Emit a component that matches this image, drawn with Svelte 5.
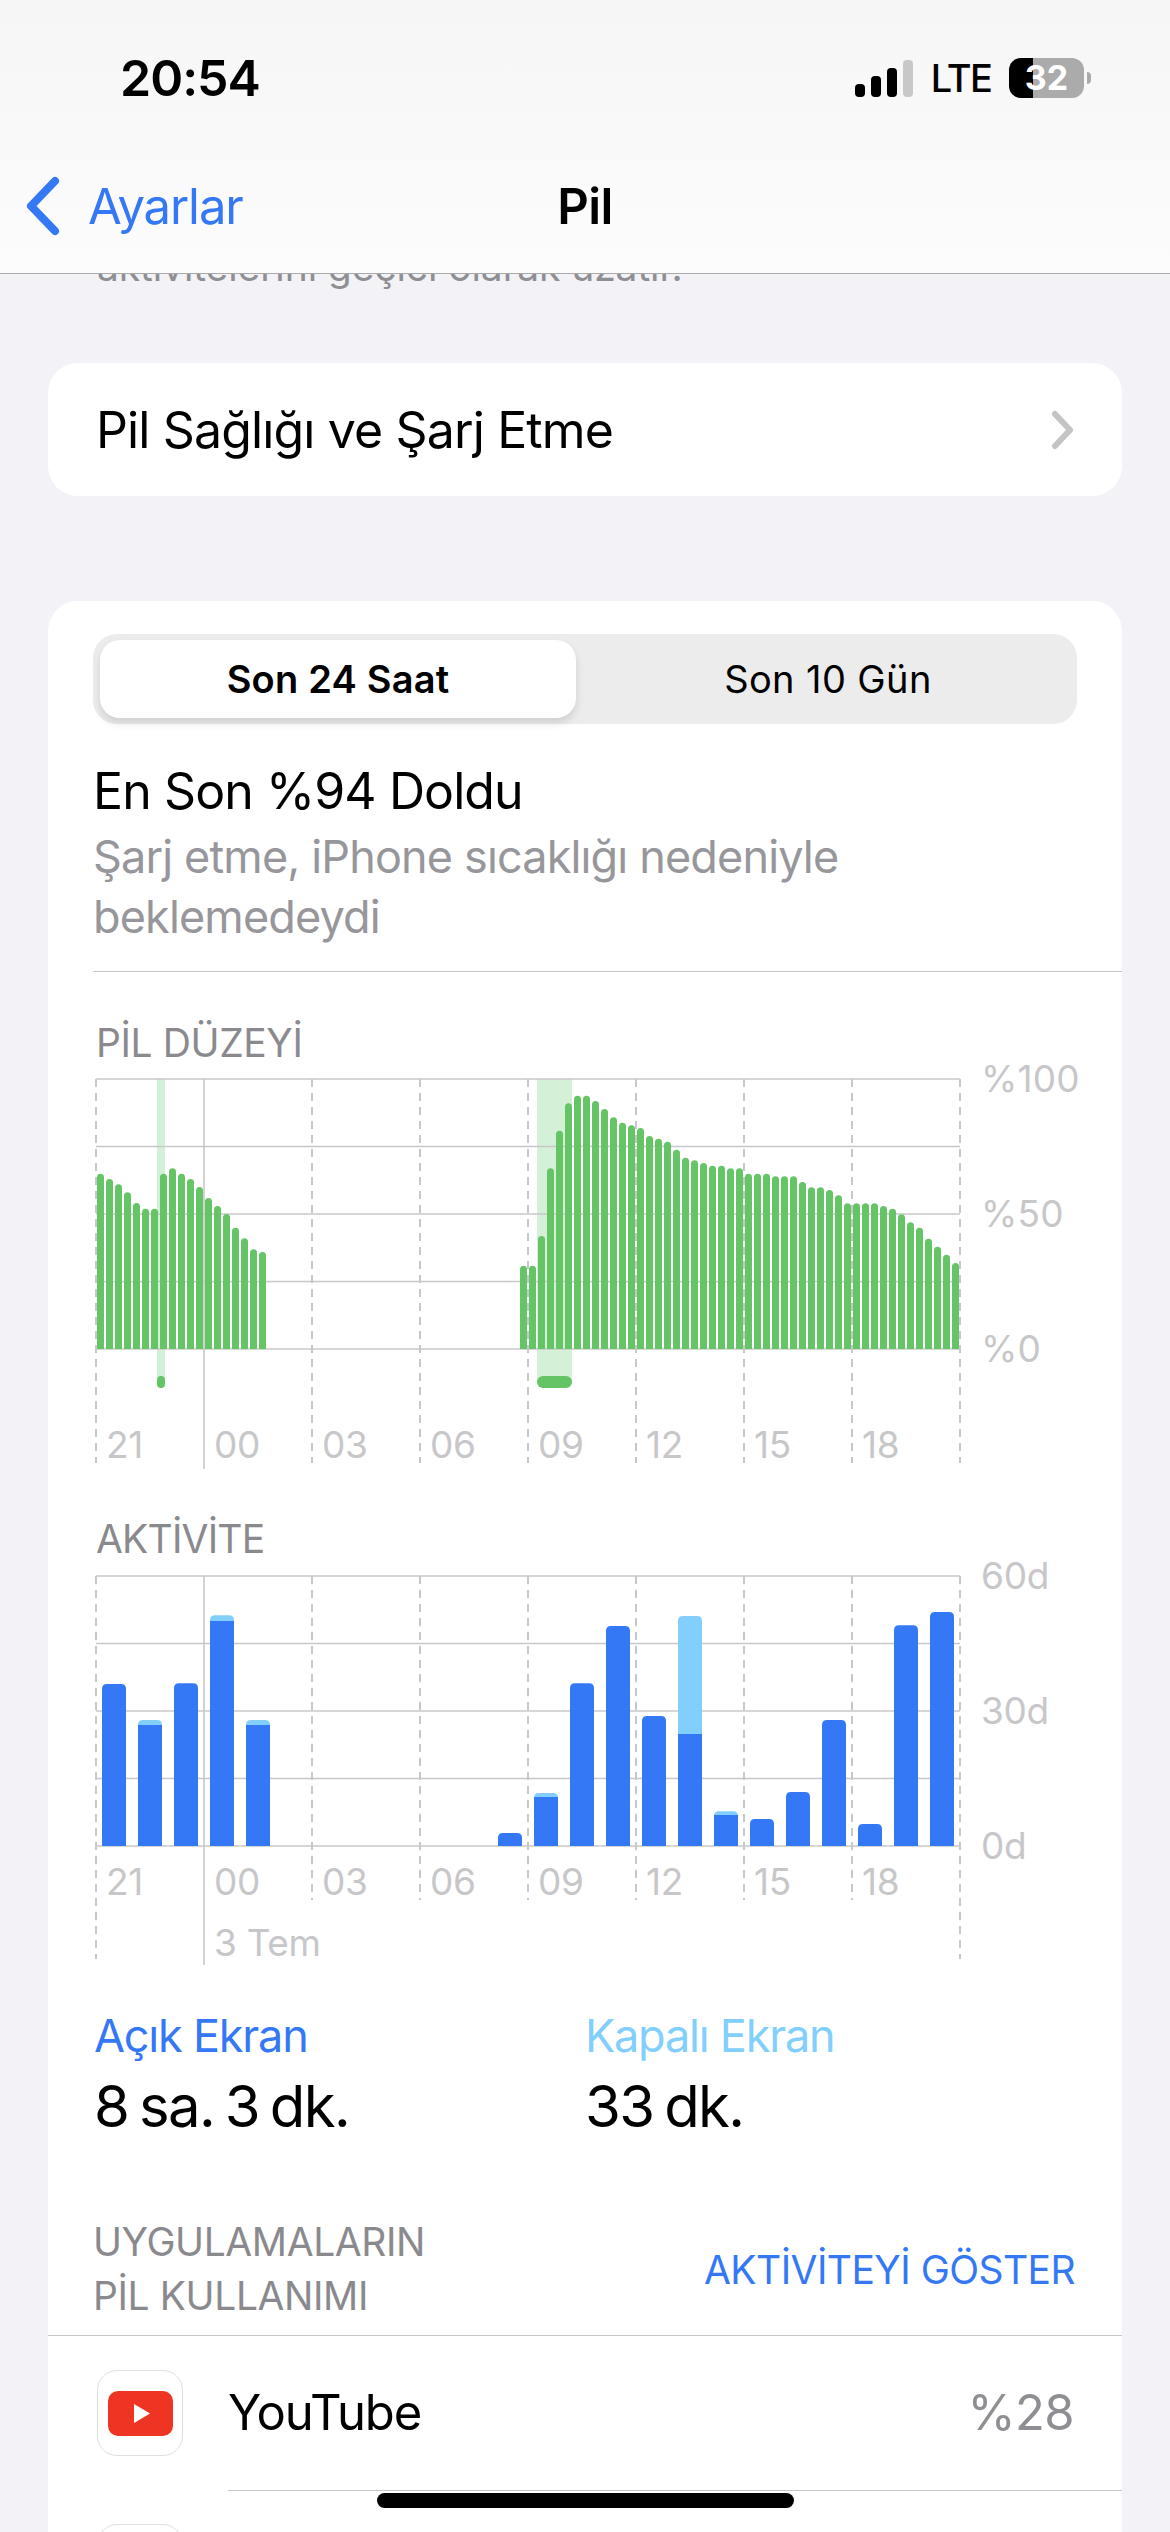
<script>
  const green = [
    [0, [461,477,493,517,549,566,566,461,445,461,477,501,534,558,582,623,655,688,696]],
    [47, [737,737,648,445,332,250,227,227,243,267,292,308,316,324,348,356,365,389,413,421,429,437,437,445,445,461,461,461,469,469,469,486,502,502,510,526,550,550,550,550,558,566,583,607,623,656,680,704,729]]
  ];
  const levelBars = green.flatMap(([start, tops]) =>
    tops.map((t, n) => ({ x: 97 + 9 * (start + n), y: 1020 + t / 3 }))
  );
  function topRounded(x, y, w, bottom, r) {
    return `M${x} ${bottom}V${y + r}Q${x} ${y} ${x + r} ${y}H${x + w - r}Q${x + w} ${y} ${x + w} ${y + r}V${bottom}Z`;
  }
  const activity = [
    [0,432,432],[1,540,555],[2,430,430],[3,226,243],[4,540,555],
    [11,879,879],[12,759,771],[13,430,430],[14,258,258],[15,528,528],[16,228,582],
    [17,814,825],[18,837,837],[19,756,756],[20,540,540],[21,852,852],[22,256,256],[23,216,216]
  ].map(([i, light, blue]) => ({
    x: 102 + 36 * i, lightY: 1540 + light / 3, blueY: 1540 + blue / 3, split: light !== blue
  }));
  const dashes = [96, 312, 420, 528, 636, 744, 852];
  const hours = [['21',106],['00',214],['03',322],['06',430],['09',538],['12',646],['15',754],['18',862]];
  const rows1 = [1079, 1146.5, 1214, 1281.5, 1349];
  const rows2 = [1576, 1643.5, 1711, 1778.5, 1846];
</script>

<div class="page">
  <header class="nav">
    <div class="status">
      <span class="time">20:54</span>
      <div class="indicators">
        <svg class="signal" width="58" height="37" viewBox="0 0 58 37">
          <rect x="0" y="24" width="10" height="13" rx="4" fill="#000"/>
          <rect x="16" y="16" width="10" height="21" rx="4" fill="#000"/>
          <rect x="32" y="8" width="10" height="29" rx="4" fill="#000"/>
          <rect x="48" y="0" width="10" height="37" rx="4" fill="#c8c8c8"/>
        </svg>
        <span class="lte">LTE</span>
        <div class="battery-wrap">
          <div class="battery">32</div>
          <span class="battery-cap"></span>
        </div>
      </div>
    </div>
    <div class="navrow">
      <div class="back">
        <svg width="36" height="60" viewBox="0 0 36 60"><path d="M30 5 L6 30 L30 55" fill="none" stroke="#3478f6" stroke-width="8" stroke-linecap="round" stroke-linejoin="round"/></svg>
        <span>Ayarlar</span>
      </div>
      <h1>Pil</h1>
      <div></div>
    </div>
  </header>

  <main class="content">
    <p class="scrolled">aktivitelerini geçici olarak uzatır.</p>

    <section class="card health">
      <span>Pil Sağlığı ve Şarj Etme</span>
      <svg width="24" height="40" viewBox="0 0 24 40"><path d="M4 4 L19 20 L4 36" fill="none" stroke="#c4c4c7" stroke-width="6" stroke-linecap="round" stroke-linejoin="round"/></svg>
    </section>

    <section class="card usage">
      <div class="segment">
        <div class="seg on">Son 24 Saat</div>
        <div class="seg off">Son 10 Gün</div>
      </div>

      <h2 class="title">En Son %94 Doldu</h2>
      <p class="body">Şarj etme, iPhone sıcaklığı nedeniyle beklemedeydi</p>
      <div class="rule"></div>

      <h3 class="caps first">PİL DÜZEYİ</h3>
      <svg class="chart" width="1074" height="420" viewBox="48 1050 1074 420">
        <rect x="157" y="1079" width="8" height="303" fill="#d4f0d6"/>
        <rect x="537" y="1079" width="35" height="303" fill="#d4f0d6"/>
        {#each rows1 as y}<line class="grid" x1="96" x2="960" y1={y} y2={y}/>{/each}
        {#each dashes as x}<line class="dash" x1={x} x2={x} y1="1079" y2="1463"/>{/each}
        <line class="dash" x1="960" x2="960" y1="1079" y2="1463"/>
        <line class="solid" x1="204" x2="204" y1="1079" y2="1469"/>
        {#each levelBars as b}<path class="green" d={topRounded(b.x, b.y, 7, 1349, 3.5)}/>{/each}
        <rect class="green" x="157" y="1376" width="8" height="12" rx="4"/>
        <rect class="green" x="537" y="1376" width="35" height="12" rx="6"/>
        {#each hours as [t, x]}<text class="tick" x={x} y="1458">{t}</text>{/each}
        <text class="tick y-label" x="981" y="1092">%100</text>
        <text class="tick y-label" x="981" y="1227">%50</text>
        <text class="tick y-label" x="981" y="1362">%0</text>
      </svg>

      <h3 class="caps second">AKTİVİTE</h3>
      <svg class="chart" width="1074" height="420" viewBox="48 1546 1074 420">
        {#each rows2 as y}<line class="grid" x1="96" x2="960" y1={y} y2={y}/>{/each}
        {#each dashes as x}<line class="dash" x1={x} x2={x} y1="1576" y2={x === 96 ? 1959 : 1900}/>{/each}
        <line class="dash" x1="960" x2="960" y1="1576" y2="1959"/>
        <line class="solid" x1="204" x2="204" y1="1576" y2="1965"/>
        {#each activity as b}
          {#if b.split}
            <path class="light" d={topRounded(b.x, b.lightY, 24, b.blueY + 1, 5)}/>
            <rect class="blue" x={b.x} y={b.blueY} width="24" height={1846 - b.blueY}/>
          {:else}
            <path class="blue" d={topRounded(b.x, b.blueY, 24, 1846, 5)}/>
          {/if}
        {/each}
        {#each hours as [t, x]}<text class="tick" x={x} y="1895">{t}</text>{/each}
        <text class="tick" x="214" y="1956">3 Tem</text>
        <text class="tick" x="981" y="1589">60d</text>
        <text class="tick" x="981" y="1724">30d</text>
        <text class="tick" x="981" y="1859">0d</text>
      </svg>

      <div class="stats">
        <div>
          <div class="stat-label on-screen">Açık Ekran</div>
          <div class="stat-value">8 sa. 3 dk.</div>
        </div>
        <div>
          <div class="stat-label off-screen">Kapalı Ekran</div>
          <div class="stat-value">33 dk.</div>
        </div>
      </div>

      <div class="apps-head">
        <div class="caps apps-title">UYGULAMALARIN<br/>PİL KULLANIMI</div>
        <div class="show">AKTİVİTEYİ GÖSTER</div>
      </div>

      <div class="apps">
        <div class="app">
          <div class="icon">
            <svg width="65" height="45" viewBox="0 0 65 45">
              <rect width="65" height="45" rx="10" fill="#ee3524"/>
              <path d="M26 13 L42 22.5 L26 32 Z" fill="#fff"/>
            </svg>
          </div>
          <div class="app-main">
            <span class="app-name">YouTube</span>
            <span class="app-pct">%28</span>
          </div>
        </div>
        <div class="app">
          <div class="icon"></div>
        </div>
      </div>
    </section>
  </main>

  <div class="home"></div>
</div>

<style>
  :global(body) { margin: 0; background: #f2f2f7; }
  .page {
    position: relative;
    width: 1170px;
    height: 2532px;
    overflow: hidden;
    background: #f2f2f7;
    font-family: Inter, "Noto Sans", sans-serif;
    color: #000;
  }
  h1, h2, h3, p { margin: 0; font-weight: 400; }

  .nav {
    position: absolute;
    inset: 0 0 auto 0;
    z-index: 2;
    height: 274px;
    box-sizing: border-box;
    background: linear-gradient(#f6f6f6, #fcfcfc);
    border-bottom: 1px solid #a9a9ac;
  }
  .status {
    height: 156px;
    display: flex;
    align-items: center;
    padding: 0 79px 0 120px;
  }
  .time { font-size: 50px; font-weight: 600; letter-spacing: -1px; line-height: 60px; }
  .indicators { margin-left: auto; display: flex; align-items: center; }
  .signal { margin-right: 18px; }
  .lte { font-size: 38px; font-weight: 500; line-height: 44px; margin-right: 18px; letter-spacing: -1.8px; }
  .battery-wrap { display: flex; align-items: center; gap: 3px; }
  .battery {
    width: 75px;
    height: 40px;
    border-radius: 12px;
    background: linear-gradient(to right, #000 32%, #ababab 32%);
    color: #fff;
    font-size: 34px;
    font-weight: 700;
    line-height: 40px;
    text-align: center;
  }
  .battery-cap { width: 4px; height: 12px; background: #ababab; border-radius: 0 6px 6px 0; }

  .navrow {
    height: 100px;
    display: grid;
    grid-template-columns: 1fr auto 1fr;
    align-items: center;
  }
  .back {
    display: flex;
    align-items: center;
    gap: 27px;
    padding-left: 25px;
    color: #3478f6;
    font-size: 49px;
    letter-spacing: -1.1px;
  }
  h1 { font-size: 49px; font-weight: 600; letter-spacing: -0.6px; }

  .content { padding: 244px 48px 0; }
  .scrolled {
    font-size: 39px;
    line-height: 46px;
    color: #8e8e93;
    padding-left: 49px;
    letter-spacing: -0.1px;
  }
  .card { background: #fff; border-radius: 30px; }
  .health {
    margin-top: 73px;
    height: 133px;
    box-sizing: border-box;
    display: flex;
    align-items: center;
    justify-content: space-between;
    padding: 0 47px 0 48px;
    font-size: 50px;
    letter-spacing: -0.86px;
  }
  .usage { margin-top: 105px; padding-top: 33px; height: 1960px; }

  .segment {
    margin: 0 45px 0 45px;
    height: 90px;
    box-sizing: border-box;
    padding: 6px 7px;
    border-radius: 24px;
    background: #ececed;
    display: grid;
    grid-template-columns: 476px 1fr;
    font-size: 38px;
    letter-spacing: 0.4px;
  }
  .seg { display: flex; align-items: center; justify-content: center; }
  .seg.on {
    background: #fff;
    border-radius: 20px;
    font-weight: 600;
    letter-spacing: 0.2px;
    box-shadow: 0 5px 9px rgba(0, 0, 0, 0.12);
  }
  .seg.off { padding-left: 10px; }

  .title {
    margin: 37px 0 0 45px;
    font-size: 50px;
    line-height: 60px;
    letter-spacing: -0.9px;
  }
  .body {
    margin: 6px 0 0 45px;
    width: 790px;
    font-size: 45px;
    line-height: 60px;
    color: #96969b;
    letter-spacing: -0.85px;
  }
  .rule { margin: 24px 0 0 45px; height: 1px; background: #c6c6c8; }

  .caps {
    font-size: 39px;
    line-height: 46px;
    color: #8a8a8e;
    letter-spacing: -0.4px;
  }
  .first { margin: 48px 0 0 48px; }
  .second { margin: 46px 0 0 48px; letter-spacing: -0.8px; }
  .chart { display: block; margin-top: -16px; }

  .grid { stroke: #c8c8ca; stroke-width: 1.5; }
  .dash { stroke: #c8c8ca; stroke-width: 2; stroke-dasharray: 8 6; }
  .solid { stroke: #c4c4c6; stroke-width: 1.5; }
  .green { fill: #65c466; }
  .blue { fill: #3478f6; }
  .light { fill: #82cffd; }
  .tick { font-size: 37px; fill: #c7c7c9; letter-spacing: -0.3px; }
  .y-label { letter-spacing: 0.2px; }

  .stats {
    margin: 43px 0 0 46px;
    display: grid;
    grid-template-columns: 491px 1fr;
  }
  .stat-label { font-size: 45px; line-height: 54px; letter-spacing: -1.2px; }
  .on-screen { color: #3478f6; }
  .off-screen { color: #82cffd; }
  .stat-value { margin-top: 8px; font-size: 58px; line-height: 70px; letter-spacing: -1.6px; word-spacing: -4px; }

  .apps-head {
    margin: 74px 47px 0 45px;
    display: flex;
    align-items: center;
    justify-content: space-between;
  }
  .apps-title { line-height: 54px; }
  .show { font-size: 39px; color: #3478f6; letter-spacing: -0.55px; }

  .apps { margin-top: 12px; border-top: 1px solid #c6c6c8; }
  .app {
    display: flex;
    align-items: center;
    gap: 45px;
    padding-left: 49px;
    height: 154px;
  }
  .icon {
    flex: none;
    width: 86px;
    height: 86px;
    box-sizing: border-box;
    border: 1.5px solid #e0e0e0;
    border-radius: 20px;
    background: #fff;
    display: flex;
    align-items: center;
    justify-content: center;
  }
  .app + .app { padding-top: 34px; align-items: flex-start; }
  .app-main {
    flex: 1;
    height: 100%;
    display: flex;
    align-items: center;
    justify-content: space-between;
    padding-right: 48px;
    border-bottom: 1px solid #c6c6c8;
  }
  .app-name { font-size: 49px; letter-spacing: -1.1px; }
  .app-pct { font-size: 49px; color: #8e8e93; letter-spacing: -0.6px; }

  .home {
    position: absolute;
    left: 377px;
    top: 2493px;
    width: 417px;
    height: 15px;
    border-radius: 8px;
    background: #000;
  }
</style>
